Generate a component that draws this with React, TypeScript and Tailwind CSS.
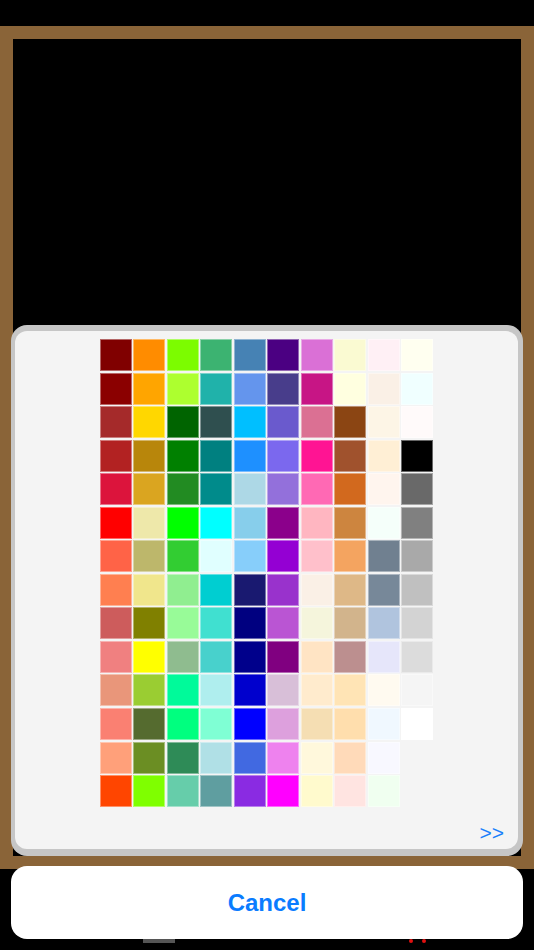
import React from 'react'

// named css colours, column by column (top to bottom)
const columns: string[][] = [
  ['#800000', '#8B0000', '#A52A2A', '#B22222', '#DC143C', '#FF0000', '#FF6347', '#FF7F50', '#CD5C5C', '#F08080', '#E9967A', '#FA8072', '#FFA07A', '#FF4500'],
  ['#FF8C00', '#FFA500', '#FFD700', '#B8860B', '#DAA520', '#EEE8AA', '#BDB76B', '#F0E68C', '#808000', '#FFFF00', '#9ACD32', '#556B2F', '#6B8E23', '#7FFF00'],
  ['#7CFC00', '#ADFF2F', '#006400', '#008000', '#228B22', '#00FF00', '#32CD32', '#90EE90', '#98FB98', '#8FBC8F', '#00FA9A', '#00FF7F', '#2E8B57', '#66CDAA'],
  ['#3CB371', '#20B2AA', '#2F4F4F', '#008080', '#008B8B', '#00FFFF', '#E0FFFF', '#00CED1', '#40E0D0', '#48D1CC', '#AFEEEE', '#7FFFD4', '#B0E0E6', '#5F9EA0'],
  ['#4682B4', '#6495ED', '#00BFFF', '#1E90FF', '#ADD8E6', '#87CEEB', '#87CEFA', '#191970', '#000080', '#00008B', '#0000CD', '#0000FF', '#4169E1', '#8A2BE2'],
  ['#4B0082', '#483D8B', '#6A5ACD', '#7B68EE', '#9370DB', '#8B008B', '#9400D3', '#9932CC', '#BA55D3', '#800080', '#D8BFD8', '#DDA0DD', '#EE82EE', '#FF00FF'],
  ['#DA70D6', '#C71585', '#DB7093', '#FF1493', '#FF69B4', '#FFB6C1', '#FFC0CB', '#FAF0E6', '#F5F5DC', '#FFE4C4', '#FFEBCD', '#F5DEB3', '#FFF8DC', '#FFFACD'],
  ['#FAFAD2', '#FFFFE0', '#8B4513', '#A0522D', '#D2691E', '#CD853F', '#F4A460', '#DEB887', '#D2B48C', '#BC8F8F', '#FFE4B5', '#FFDEAD', '#FFDAB9', '#FFE4E1'],
  ['#FFF0F5', '#FAF0E6', '#FDF5E6', '#FFEFD5', '#FFF5EE', '#F5FFFA', '#708090', '#778899', '#B0C4DE', '#E6E6FA', '#FFFAF0', '#F0F8FF', '#F8F8FF', '#F0FFF0'],
  ['#FFFFF0', '#F0FFFF', '#FFFAFA', '#000000', '#696969', '#808080', '#A9A9A9', '#C0C0C0', '#D3D3D3', '#DCDCDC', '#F5F5F5', '#FFFFFF', '', ''],
]

const rows = Array.from({ length: 14 }, (_, r) => columns.map((col) => col[r]))

export default function App() {
  return (
    <div
      className="relative h-[950px] w-[534px] overflow-hidden bg-black"
      style={{ fontFamily: '"Liberation Sans", Arial, sans-serif' }}
    >
      {/* wooden frame */}
      <div className="mt-[26px] h-[843px] bg-[#8A6438] p-[13px]">
        <div className="h-full w-full bg-black" />
      </div>

      {/* bits peeking from under the action sheet */}
      <div className="absolute left-[143px] top-[939px] h-[4px] w-[32px] bg-[#555555]" />
      <div className="absolute left-[409px] top-[939px] h-[4px] w-[4px] rounded-full bg-[#e01010]" />
      <div className="absolute left-[422px] top-[939px] h-[4px] w-[4px] rounded-full bg-[#e01010]" />

      {/* action sheet */}
      <div className="absolute left-[11px] right-[11px] top-[325px] flex flex-col gap-[10px]">
        <div className="h-[531px] rounded-[16px] bg-[#c6c6c6] pb-[7px] pl-[4px] pr-[5px] pt-[6px]">
          <div className="flex h-full flex-col rounded-[12px] bg-[#f4f4f4] pt-[8px]">
            <div className="mx-auto grid grid-cols-[repeat(10,32px)] gap-[1.55px]">
              {rows.map((row, r) =>
                row.map((c, i) => (
                  <div
                    key={r + '-' + i}
                    className={c ? 'h-[32px] w-[32px] border border-white/40' : 'h-[32px] w-[32px]'}
                    style={c ? { backgroundColor: c } : undefined}
                  />
                ))
              )}
            </div>
            <div className="flex-1" />
            <div className="flex justify-end pb-[6px] pr-[14px]">
              <span className="text-[21px] leading-none text-[#1a7ffb]">&gt;&gt;</span>
            </div>
          </div>
        </div>

        <button className="flex h-[73px] w-full items-center justify-center rounded-[16px] bg-white">
          <span className="text-[24px] font-bold text-[#0a7cff]">Cancel</span>
        </button>
      </div>
    </div>
  )
}
